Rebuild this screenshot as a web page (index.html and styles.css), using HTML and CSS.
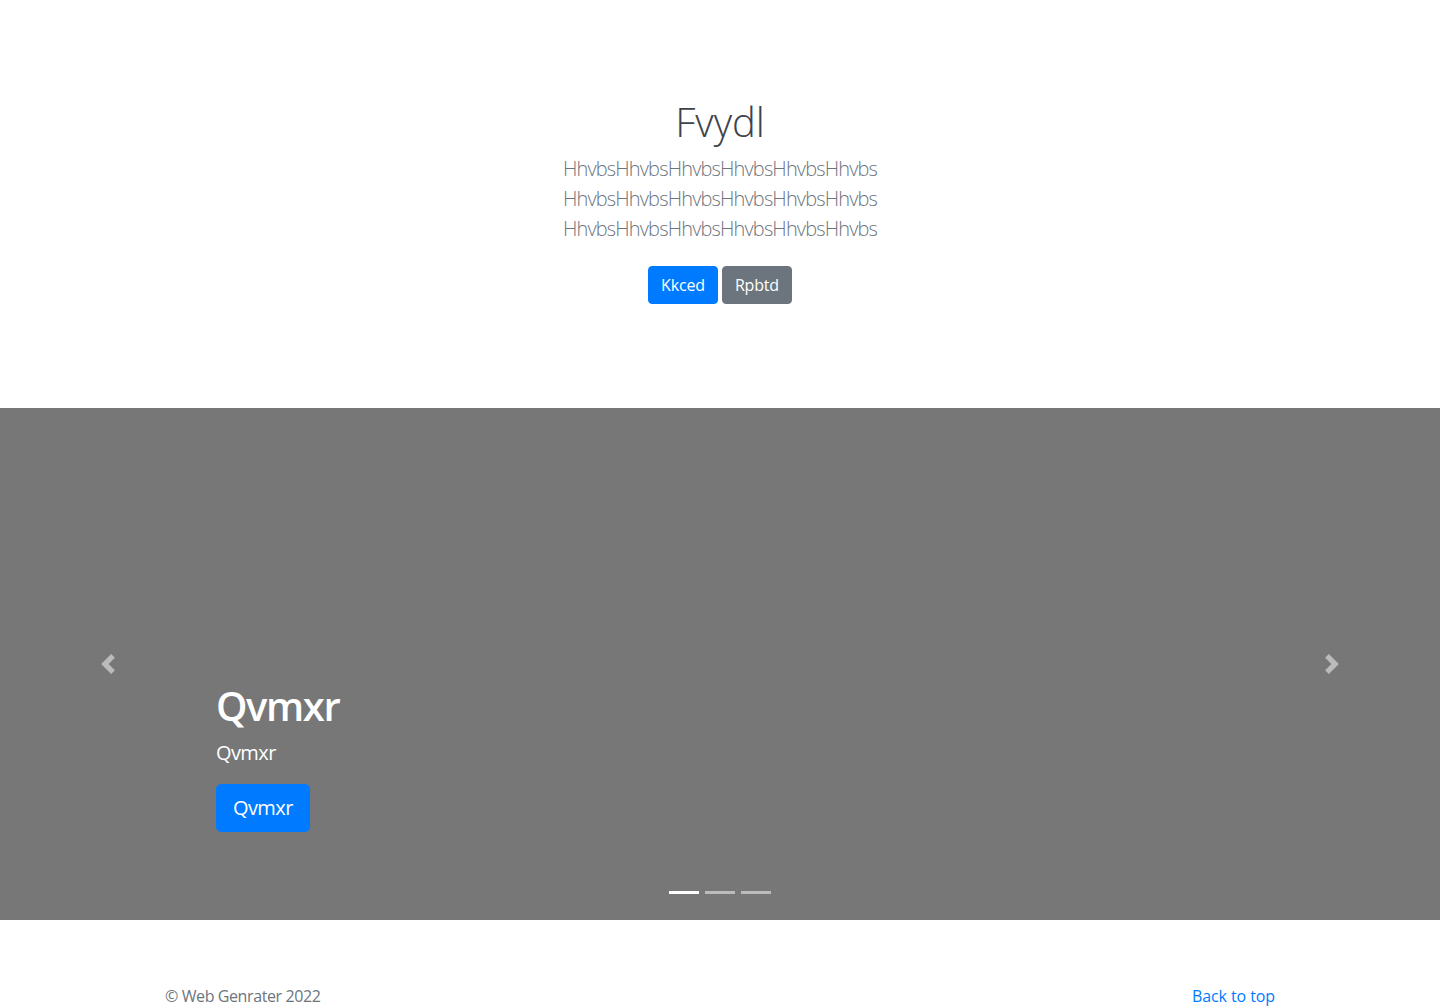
FILE: index.html
```html
<!DOCTYPE html>
<html lang="en">
<head>
<meta charset="utf-8">
<title>Fvydl</title>
<link rel="stylesheet" href="styles.css">
</head>
<body>
<main>
  <section class="jumbotron">
    <h1 class="jumbo-heading">Fvydl</h1>
    <p class="lead">HhvbsHhvbsHhvbsHhvbsHhvbsHhvbs<br>HhvbsHhvbsHhvbsHhvbsHhvbsHhvbs<br>HhvbsHhvbsHhvbsHhvbsHhvbsHhvbs</p>
    <p class="actions"><a href="#" class="btn btn-primary">Kkced</a> <a href="#" class="btn btn-secondary">Rpbtd</a></p>
  </section>

  <div class="carousel">
    <div class="carousel-item">
      <div class="carousel-caption">
        <h1 class="caption-title">Qvmxr</h1>
        <p class="caption-text">Qvmxr</p>
        <p class="caption-action"><a href="#" class="btn btn-lg btn-primary">Qvmxr</a></p>
      </div>
    </div>
    <a href="#" class="carousel-control prev" aria-label="Previous">
      <svg class="control-icon" viewBox="0 0 8 8" width="20" height="20"><path fill="#fff" d="M5.25 0l-4 4 4 4 1.5-1.5L4.25 4l2.5-2.5L5.25 0z"/></svg>
    </a>
    <a href="#" class="carousel-control next" aria-label="Next">
      <svg class="control-icon" viewBox="0 0 8 8" width="20" height="20"><path fill="#fff" d="M2.75 0l-1.5 1.5L3.75 4l-2.5 2.5L2.75 8l4-4-4-4z"/></svg>
    </a>
    <ol class="indicators">
      <li class="indicator active"></li>
      <li class="indicator"></li>
      <li class="indicator"></li>
    </ol>
  </div>

  <footer class="footer">
    <p class="back-top"><a href="#">Back to top</a></p>
    <p class="copy">© Web Genrater 2022</p>
  </footer>
</main>
</body>
</html>
```

FILE: styles.css
```css
* { box-sizing: border-box; }

html, body {
  margin: 0;
}

body {
  padding-top: 50px;
  font-family: "Open Sans", "Noto Sans", "Liberation Sans", sans-serif;
  font-size: 16px;
  line-height: 1.5;
  color: #212529;
  background: #fff;
}

a { color: #007bff; text-decoration: none; }

.jumbotron {
  padding: 48px 32px 48px;
  margin-bottom: 32px;
  text-align: center;
}

.jumbo-heading {
  margin: 0 0 8px;
  font-size: 40px;
  font-weight: 300;
  line-height: 1.2;
  color: #3d434a;
}

.lead {
  margin: 0 0 14px;
  font-size: 20px;
  font-weight: 300;
  line-height: 30px;
  color: #6c757d;
  letter-spacing: -0.85px;
}

.actions {
  margin: 0 0 16px;
}

.btn {
  display: inline-block;
  padding: 6px 12px;
  font-size: 16px;
  line-height: 24px;
  border: 1px solid transparent;
  border-radius: 4px;
  color: #fff;
  vertical-align: middle;
  letter-spacing: -0.2px;
}

.actions .btn { margin: 8px 0; }

.btn-primary { background: #007bff; border-color: #007bff; }
.btn-secondary { background: #6c757d; border-color: #6c757d; }

.btn-lg {
  padding: 8px 16px;
  font-size: 20px;
  line-height: 30px;
  border-radius: 5px;
}

.carousel {
  position: relative;
  height: 512px;
  margin-bottom: 64px;
  background: #777;
}

.carousel-item {
  height: 100%;
}

.carousel-caption {
  position: absolute;
  left: 15%;
  right: 15%;
  bottom: 48px;
  padding: 20px 0;
  color: #fff;
  z-index: 10;
}

.caption-title {
  margin: 0 0 8px;
  font-size: 40px;
  font-weight: 600;
  line-height: 1.2;
  letter-spacing: -1.4px;
}

.caption-text {
  margin: 0 0 16px;
  font-size: 20px;
  line-height: 30px;
  letter-spacing: -0.6px;
}

.caption-action {
  margin: 0 0 20px;
  line-height: 0;
}

.caption-action .btn { letter-spacing: -0.6px; }

.carousel-control {
  position: absolute;
  top: 0;
  bottom: 0;
  width: 15%;
  display: flex;
  align-items: center;
  justify-content: center;
  opacity: 0.5;
  z-index: 5;
}

.carousel-control.prev { left: 0; }
.carousel-control.next { right: 0; }

.control-icon { display: block; }

.indicators {
  position: absolute;
  left: 15%;
  right: 15%;
  bottom: 0;
  margin: 0 0 16px;
  padding: 0;
  list-style: none;
  display: flex;
  justify-content: center;
  z-index: 15;
}

.indicator {
  width: 30px;
  height: 3px;
  margin: 10px 3px;
  background: #fff;
  opacity: 0.5;
}

.indicator.active { opacity: 1; }

.footer {
  max-width: 1140px;
  margin: 0 auto;
  padding: 0 15px;
  color: #6c757d;
  letter-spacing: -0.4px;
}

.footer p { margin: 0 0 16px; }

.back-top { float: right; letter-spacing: -0.1px; }
```
